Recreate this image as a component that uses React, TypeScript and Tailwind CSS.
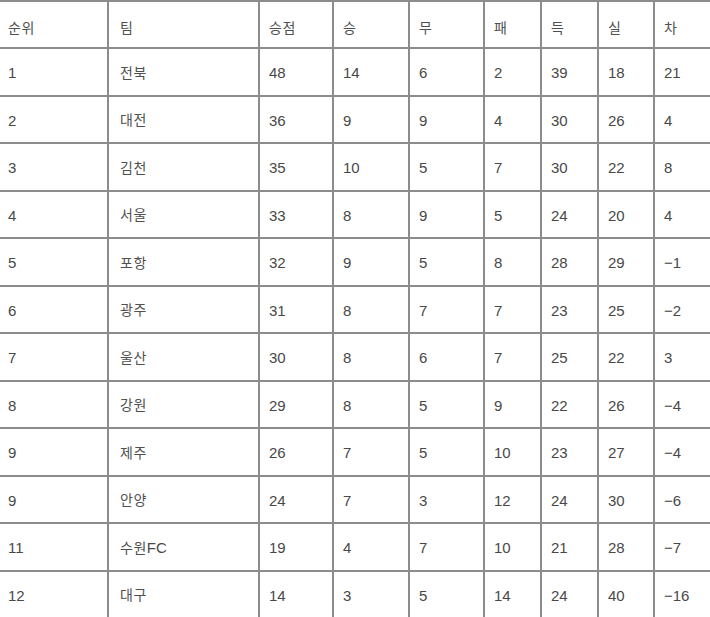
import React from "react";

const header = ["순위", "팀", "승점", "승", "무", "패", "득", "실", "차"];
const rows: string[][] = [
  ["1", "전북", "48", "14", "6", "2", "39", "18", "21"],
  ["2", "대전", "36", "9", "9", "4", "30", "26", "4"],
  ["3", "김천", "35", "10", "5", "7", "30", "22", "8"],
  ["4", "서울", "33", "8", "9", "5", "24", "20", "4"],
  ["5", "포항", "32", "9", "5", "8", "28", "29", "−1"],
  ["6", "광주", "31", "8", "7", "7", "23", "25", "−2"],
  ["7", "울산", "30", "8", "6", "7", "25", "22", "3"],
  ["8", "강원", "29", "8", "5", "9", "22", "26", "−4"],
  ["9", "제주", "26", "7", "5", "10", "23", "27", "−4"],
  ["9", "안양", "24", "7", "3", "12", "24", "30", "−6"],
  ["11", "수원FC", "19", "4", "7", "10", "21", "28", "−7"],
  ["12", "대구", "14", "3", "5", "14", "24", "40", "−16"],
];

const widths = [
  "w-[109px] pl-[8px]",
  "w-[151px] pl-[11px]",
  "w-[74px] pl-[9px]",
  "w-[76px] pl-[9px]",
  "w-[75px] pl-[9px]",
  "w-[57px] pl-[9px]",
  "w-[57px] pl-[9px]",
  "w-[56px] pl-[9px]",
  "w-[90px] pl-[9px]",
];

function Cell({ text }: { text: string }) {
  const parts = text.split(/([A-Za-z0-9−]+)/).filter((p) => p !== "");
  return (
    <>
      {parts.map((p, i) =>
        /[\uac00-\ud7a3]/.test(p) ? (
          <span key={i} className="text-[14px] tracking-[0.5px] text-[#505050]">
            {p}
          </span>
        ) : (
          <span key={i}>{p}</span>
        )
      )}
    </>
  );
}

function Row({ cells, head }: { cells: string[]; head?: boolean }) {
  return (
    <div
      className={
        "flex shrink-0 border-b-2 border-[#8c8c8c] " +
        (head ? "h-[49px] border-t-2" : "h-[47.5px]")
      }
    >
      {cells.map((c, i) => (
        <div
          key={i}
          className={
            "flex shrink-0 items-center border-r-2 border-[#8c8c8c] " +
            (head ? "pt-[7px] " : "pt-[3px] ") +
            widths[i]
          }
        >
          <Cell text={c} />
        </div>
      ))}
    </div>
  );
}

export default function App() {
  return (
    <div
      className="h-[617px] w-[710px] overflow-hidden bg-white text-[15px] text-[#484848]"
      style={{ fontFamily: '"Liberation Sans", "Noto Sans CJK KR", sans-serif' }}
    >
      <div className="flex w-[800px] flex-col">
        <Row cells={header} head />
        {rows.map((r, i) => (
          <Row key={i} cells={r} />
        ))}
      </div>
    </div>
  );
}
